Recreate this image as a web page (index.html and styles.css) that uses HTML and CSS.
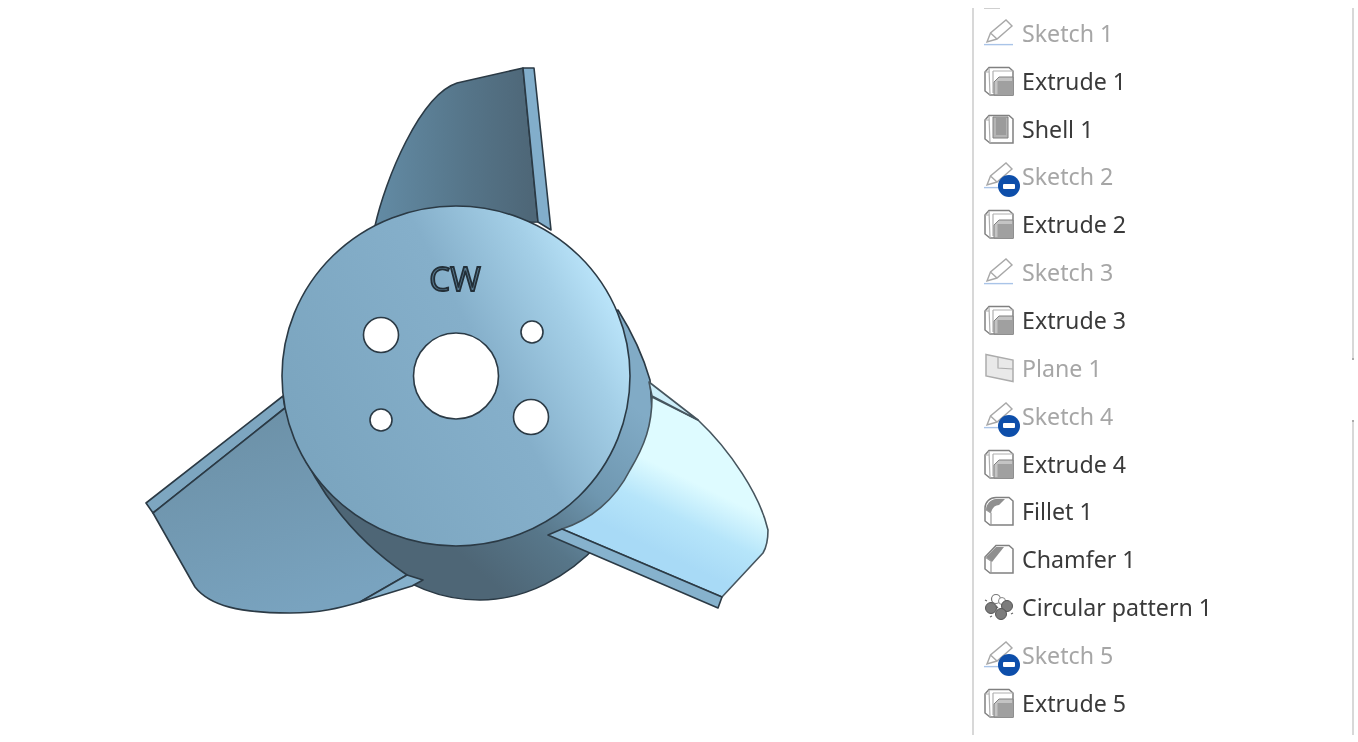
FILE: index.html
```html
<!DOCTYPE html>
<html>
    <head>
        <meta charset="utf-8">
        <meta name="viewport" content="initial-scale=1, width=device-width">
        <title>Feature list</title>
        <link rel="stylesheet" href="styles.css">
    </head>
    <body>
    <svg class="viewer" viewBox="0 0 972 742" width="972" height="742">
        <defs>
            <linearGradient id="top-blade" gradientUnits="userSpaceOnUse" x1="380" y1="150" x2="530" y2="150">
                <stop offset="0" stop-color="#628aa3"/>
                <stop offset="0.6" stop-color="#557488"/>
                <stop offset="1" stop-color="#4e6778"/>
            </linearGradient>
            <linearGradient id="left-blade" gradientUnits="userSpaceOnUse" x1="240" y1="430" x2="300" y2="610">
                <stop offset="0" stop-color="#6d92a9"/>
                <stop offset="1" stop-color="#79a3bf"/>
            </linearGradient>
            <linearGradient id="right-blade" gradientUnits="userSpaceOnUse" x1="672" y1="558" x2="706" y2="488">
                <stop offset="0" stop-color="#a8daf6"/>
                <stop offset="0.5" stop-color="#b6e5fa"/>
                <stop offset="1" stop-color="#defbff"/>
            </linearGradient>
            <linearGradient id="hub-side" gradientUnits="userSpaceOnUse" x1="500" y1="590" x2="650" y2="420">
                <stop offset="0" stop-color="#4e6676"/>
                <stop offset="0.3" stop-color="#577689"/>
                <stop offset="0.6" stop-color="#6f97b0"/>
                <stop offset="1" stop-color="#81abc6"/>
            </linearGradient>
            <linearGradient id="hub-face" gradientUnits="userSpaceOnUse" x1="300" y1="480" x2="625" y2="310">
                <stop offset="0" stop-color="#7aa4be"/>
                <stop offset="0.6" stop-color="#85afca"/>
                <stop offset="0.85" stop-color="#a4cfe7"/>
                <stop offset="1" stop-color="#bde7fc"/>
            </linearGradient>
        </defs>
        <g class="edges">
            <path fill="url(#top-blade)" d="M375 226 C385 180 420 95 457 83 L523 68 L538 222 Z"/>
            <path fill="#82aecb" d="M523 68 L534 68 L551 230 L538 222 Z"/>
            <path fill="url(#hub-side)" d="M618 310 Q640 345 650 380 L652 410 C652 510 570 600 480 600 C400 600 340 540 299 450 Z"/>
            <path fill="#7da6c0" d="M283 396 L146 503 L153 513 L285 408 Z"/>
            <path fill="url(#left-blade)" d="M285 408 C295 440 305 460 315 477 C340 520 370 550 407 575 L360 602 C340 608 320 613 290 613 C240 613 210 606 195 587 L153 513 Z"/>
            <path fill="#85b0cb" d="M407 575 L423 580 L412 586 L360 602 Z"/>
            <path fill="url(#right-blade)" class="pale-edge" d="M562 529 C590 520 615 500 630 470 C645 445 652 425 652 397 L698 420 C730 450 760 495 768 530 C768 540 766 548 763 553 L722 597 Z"/>
            <path fill="#cdeef9" class="pale-edge" d="M649 382 L698 420 L652 396 Z"/>
            <path fill="#86b2cd" d="M548 535 L562 529 L722 597 L718 608 Z"/>
            <ellipse fill="url(#hub-face)" cx="456" cy="376" rx="174" ry="170"/>
            <g fill="#fff">
                <ellipse cx="456" cy="376" rx="42.5" ry="43"/>
                <circle cx="381" cy="335" r="17.5"/>
                <circle cx="532" cy="332" r="11"/>
                <circle cx="381" cy="420" r="11"/>
                <circle cx="531" cy="417" r="17.5"/>
            </g>
        </g>
        <text class="engraved" x="455" y="291" text-anchor="middle">CW</text>
    </svg>

    <svg class="icon-defs" width="0" height="0">
        <symbol id="i-sketch" viewBox="0 0 30 30">
            <path fill="#fff" stroke="#a8a8a8" stroke-width="1.4" d="M3 24 L6.500 15 L22 2 L28 8 L13 21 Z M6.500 15 L13 21"/>
            <path stroke="#a9c4e8" stroke-width="1.4" d="M0 26.600 H29"/>
        </symbol>
        <symbol id="i-extrude" viewBox="0 0 30 30">
            <path fill="#fff" stroke="#808080" stroke-width="1.5" d="M1 6 L5 1.500 H25 L29 5 V29 H6 L1 25 Z"/>
            <path fill="none" stroke="#b0b0b0" stroke-width="1.2" d="M5 2 L6 29 M1 6 H5 M9 5 H25 L29 5 M9 5 V27"/>
            <path fill="#c4c4c4" stroke="#808080" d="M10 16 L15 11 H29 V29 H10 Z"/>
            <path fill="#a0a0a0" d="M13.500 15 H29 V29 H13.500 Z"/>
        </symbol>
        <symbol id="i-shell" viewBox="0 0 30 30">
            <path fill="#fff" stroke="#808080" stroke-width="1.5" d="M1 6 L5 1.500 H25 L29 5 V29 H6 L1 25 Z"/>
            <path fill="none" stroke="#b0b0b0" stroke-width="1.2" d="M5 2 L6 29 M1 6 H5"/>
            <path fill="#b4b4b4" stroke="#808080" d="M9 3 H24 V24 H9 Z"/>
            <path fill="#9b9b9b" d="M12 3 H22 V21 H12 Z"/>
        </symbol>
        <symbol id="i-plane" viewBox="0 0 30 30">
            <path fill="#e9e9e9" stroke="#acacac" stroke-width="1.5" d="M2 1.500 L29 7 V28.500 L2 23 Z"/>
            <path fill="none" stroke="#acacac" stroke-width="1.2" d="M14 4 V15 L29 16"/>
        </symbol>
        <symbol id="i-fillet" viewBox="0 0 30 30">
            <path fill="#fff" stroke="#808080" stroke-width="1.5" d="M1 12 C1 6 6 1.500 12 1.500 H25 L29 5 V29 H6 L1 25 Z"/>
            <path fill="#8f8f8f" d="M2 14 C2 8 7 3 12 3 H21 L15 9 C11 9 8 12 7 17 Z"/>
            <path fill="none" stroke="#999" stroke-width="1.2" d="M7 17 V29 M1 13 L7 17"/>
        </symbol>
        <symbol id="i-chamfer" viewBox="0 0 30 30">
            <path fill="#fff" stroke="#808080" stroke-width="1.5" d="M1 13 L12 1.500 H25 L29 5 V29 H6 L1 25 Z"/>
            <path fill="#8f8f8f" d="M2 13 L12 3 H20 L8 18 Z"/>
            <path fill="none" stroke="#999" stroke-width="1.2" d="M7 17 V29 M1 13 L7 17"/>
        </symbol>
        <symbol id="i-pattern" viewBox="0 0 30 30">
            <circle cx="12" cy="7" r="4.500" fill="#fff" stroke="#777" stroke-width="1.2"/>
            <circle cx="18" cy="9" r="3.500" fill="#fff" stroke="#888"/>
            <circle cx="7" cy="16" r="5.500" fill="#7c7c7c" stroke="#555"/>
            <circle cx="23" cy="14" r="5.500" fill="#7c7c7c" stroke="#555"/>
            <circle cx="17" cy="22" r="5.500" fill="#7c7c7c" stroke="#555"/>
            <path stroke="#666" stroke-width="1.2" d="M1 8 L3 9 M12 14 L14 16 M27 22 L29 21 M6 25 L8 24"/>
        </symbol>
    </svg>

    <div class="panel">
        <div class="feature-list">
            <div class="sliver"></div>
            <div class="row off"><span class="row-icon"><svg class="icon"><use href="#i-sketch"/></svg></span>Sketch 1</div>
            <div class="row"><span class="row-icon"><svg class="icon"><use href="#i-extrude"/></svg></span>Extrude 1</div>
            <div class="row"><span class="row-icon"><svg class="icon"><use href="#i-shell"/></svg></span>Shell 1</div>
            <div class="row off"><span class="row-icon"><svg class="icon"><use href="#i-sketch"/></svg><span class="badge"></span></span>Sketch 2</div>
            <div class="row"><span class="row-icon"><svg class="icon"><use href="#i-extrude"/></svg></span>Extrude 2</div>
            <div class="row off"><span class="row-icon"><svg class="icon"><use href="#i-sketch"/></svg></span>Sketch 3</div>
            <div class="row"><span class="row-icon"><svg class="icon"><use href="#i-extrude"/></svg></span>Extrude 3</div>
            <div class="row off"><span class="row-icon"><svg class="icon"><use href="#i-plane"/></svg></span>Plane 1</div>
            <div class="row off"><span class="row-icon"><svg class="icon"><use href="#i-sketch"/></svg><span class="badge"></span></span>Sketch 4</div>
            <div class="row"><span class="row-icon"><svg class="icon"><use href="#i-extrude"/></svg></span>Extrude 4</div>
            <div class="row"><span class="row-icon"><svg class="icon"><use href="#i-fillet"/></svg></span>Fillet 1</div>
            <div class="row"><span class="row-icon"><svg class="icon"><use href="#i-chamfer"/></svg></span>Chamfer 1</div>
            <div class="row"><span class="row-icon"><svg class="icon"><use href="#i-pattern"/></svg></span>Circular pattern 1</div>
            <div class="row off"><span class="row-icon"><svg class="icon"><use href="#i-sketch"/></svg><span class="badge"></span></span>Sketch 5</div>
            <div class="row"><span class="row-icon"><svg class="icon"><use href="#i-extrude"/></svg></span>Extrude 5</div>
        </div>
        <div class="rail">
            <div class="rail-top"></div>
            <div class="rail-bottom"></div>
        </div>
    </div>
    </body>
</html>
```

FILE: styles.css
```css
body {
    display: flex;
    margin: 0;
    height: 742px;
    overflow: hidden;
    background-color: #ffffff;
    font-family: "Noto Sans", sans-serif;
}
.viewer {
    display: block;
    flex: none;
    filter: blur(0.6px);
}
.edges {
    stroke: #2b3a45;
    stroke-width: 1.6;
    stroke-linejoin: round;
}
.pale-edge {
    stroke: #46555e;
}
.engraved {
    font-family: "Open Sans", sans-serif;
    font-size: 33px;
    fill: #587a90;
    stroke: #232f38;
    stroke-width: 1.8;
}
.icon-defs {
    position: absolute;
}
.panel {
    display: flex;
    flex: 1;
    height: 727px;
    margin-top: 8px;
    border-left: 2px solid #d8d8d8;
}
.feature-list {
    width: 378px;
    overflow: hidden;
}
.sliver {
    width: 16px;
    height: 1px;
    margin-left: 10px;
    background-color: #cfcfcf;
}
.row {
    display: flex;
    align-items: center;
    height: 47.85px;
    padding-left: 10px;
    font-size: 23.2px;
    color: #3a3a3a;
    filter: blur(0.3px);
}
.off {
    color: #a6a6a6;
}
.row-icon {
    position: relative;
    flex: none;
    width: 30px;
    height: 30px;
    margin-right: 8px;
}
.icon {
    display: block;
    width: 30px;
    height: 30px;
}
.badge {
    position: absolute;
    left: 14px;
    top: 14px;
    width: 22px;
    height: 22px;
    border-radius: 50%;
    background-color: #0d4eaa;
}
.badge::after {
    content: "";
    position: absolute;
    left: 5px;
    top: 8.5px;
    width: 12px;
    height: 5px;
    border-radius: 1px;
    background-color: #ffffff;
}
.rail {
    display: flex;
    flex-direction: column;
    gap: 60px;
    width: 2px;
}
.rail-top {
    height: 352px;
    background-color: #d8d8d8;
    border-bottom: 2px solid #ababab;
    box-sizing: border-box;
}
.rail-bottom {
    flex: 1;
    background-color: #d8d8d8;
    border-top: 2px solid #ababab;
}
```
